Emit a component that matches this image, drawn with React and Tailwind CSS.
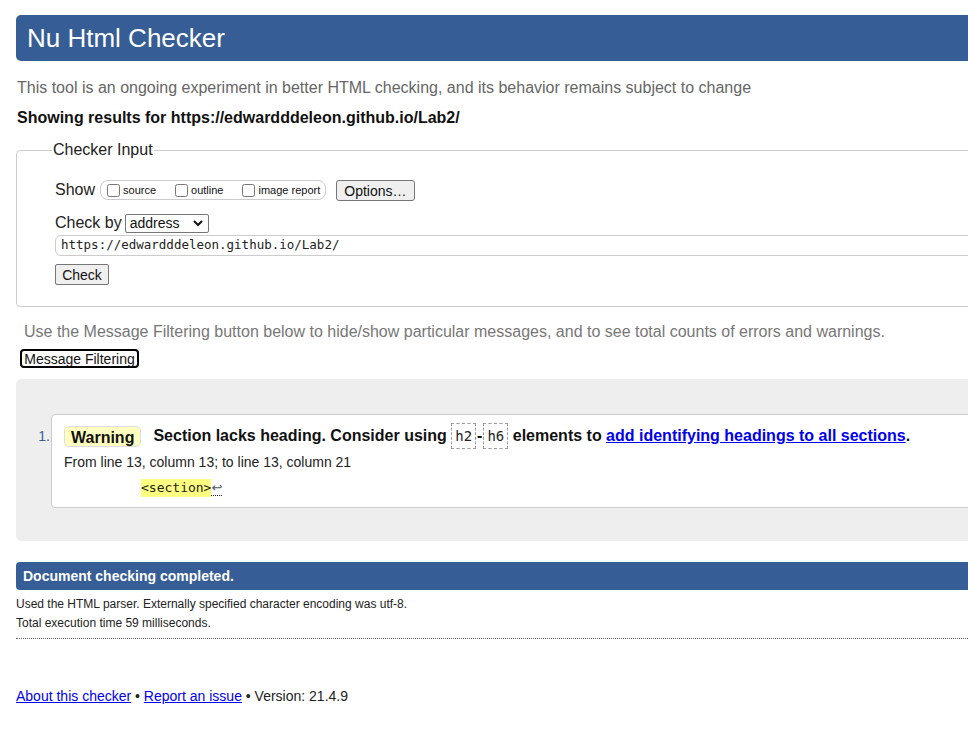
import React from 'react';

const sans = { fontFamily: '"Liberation Sans", Arial, sans-serif' };

function Checkbox({ label }) {
    return (
        <label className="inline-flex items-center gap-[3px] text-[11px] text-[#111]">
            <input type="checkbox" className="w-[13px] h-[13px] m-0" />
            {label}
        </label>
    );
}

function CodeBox({ children }) {
    return (
        <code className="inline-block border border-dashed border-[#999] px-[3px] leading-[24px] font-['DejaVu_Sans_Mono',monospace] font-normal text-[14px] text-[#222]">
            {children}
        </code>
    );
}

export default function App() {
    return (
        <div className="w-full min-h-[738px] bg-white overflow-hidden font-['Liberation_Sans',Arial,sans-serif]" style={sans}>
            <div className="w-[1120px] pl-4 pt-[15px]">
                {/* Header */}
                <h1 className="h-[46px] bg-[#365d95] rounded-[5px] text-white text-[26px] leading-[46px] pl-[11px]">
                    Nu Html Checker
                </h1>

                <p className="mt-[17px] text-[16px] leading-[20px] text-[#666] pl-px">
                    This tool is an ongoing experiment in better HTML checking, and its behavior remains subject to change
                </p>
                <p className="mt-[10px] text-[16px] leading-[20px] font-bold text-[#111] pl-px">
                    Showing results for https://edwardddeleon.github.io/Lab2/
                </p>

                {/* Checker input */}
                <fieldset className="mt-[12px] border border-[#ccc] rounded-[4px] pl-[38px] pr-4 pb-[19px] pt-[12px]">
                    <legend className="text-[16px] leading-[20px] text-[#222] -ml-[3px] px-px">Checker Input</legend>

                    <div className="flex items-center h-[22px] mt-[7px]">
                        <span className="text-[16px] text-[#222] mr-[5px]">Show</span>
                        <div className="flex items-center h-[20px] border border-[#ccc] rounded-[8px] pl-[6px] pr-[5px] gap-[19px]">
                            <Checkbox label="source" />
                            <Checkbox label="outline" />
                            <Checkbox label="image report" />
                        </div>
                        <button className="ml-[10px] h-[21px] px-[7px] bg-[#efefef] border border-[#767676] rounded-[3px] text-[14px] text-[#111]">
                            Options…
                        </button>
                    </div>

                    <div className="flex items-center mt-[12px] h-[20px]">
                        <span className="text-[16px] text-[#222] mr-[3px]">Check by</span>
                        <div className="relative w-[84px] h-[19px] border border-[#767676] rounded-[2px] flex items-center pl-[4px] text-[14px] text-[#111]">
                            address
                            <svg className="absolute right-[5px] top-[5px]" width="10" height="7" viewBox="0 0 10 7">
                                <path d="M1 1 L5 5 L9 1" fill="none" stroke="#111" strokeWidth="2" />
                            </svg>
                        </div>
                    </div>

                    <div className="mt-[2px] h-[21px] border border-[#ccc] rounded-[6px] flex items-center pl-[5px] font-['DejaVu_Sans_Mono',monospace] text-[12.5px] text-[#222]">
                        https://edwardddeleon.github.io/Lab2/
                    </div>

                    <button className="mt-[8px] h-[21px] w-[54px] bg-[#efefef] border border-[#767676] rounded-[2px] text-[14px] text-[#111]">
                        Check
                    </button>
                </fieldset>

                <p className="mt-[15px] pl-2 text-[16px] leading-[20px] text-[#777]">
                    Use the Message Filtering button below to hide/show particular messages, and to see total counts of errors and warnings.
                </p>
                <button className="block mt-[7px] ml-1 h-[19px] w-[119px] border-2 border-black rounded-[4px] text-[14px] leading-[14px] text-[#111] bg-white">
                    Message Filtering
                </button>

                {/* Results */}
                <div className="mt-[11px] bg-[#eee] rounded-[5px] pt-[35px] pb-[33px]">
                    <div className="flex">
                        <span className="w-[35px] text-right pr-[1px] pt-[12px] text-[14px] text-[#365d95]">1.</span>
                        <div className="flex-1 bg-white border border-[#ccc] rounded-[4px] pl-3 pt-[10px] pb-[10px]">
                            <div className="flex items-center h-[22px] text-[16px] font-bold text-[#111]">
                                <span className="h-[21px] leading-[21px] bg-[#ffffc0] border border-[#ddd] rounded-[5px] px-[6px] mr-3">
                                    Warning
                                </span>
                                <span className="whitespace-pre">Section lacks heading. Consider using </span>
                                <CodeBox>h2</CodeBox>
                                <span className="mx-px">-</span>
                                <CodeBox>h6</CodeBox>
                                <span className="whitespace-pre"> elements to </span>
                                <a href="#" className="text-[#0000ee] underline">add identifying headings to all sections</a>
                                <span>.</span>
                            </div>
                            <p className="mt-[6px] text-[14px] leading-[18px] text-[#222]">
                                From line 13, column 13; to line 13, column 21
                            </p>
                            <p className="mt-[8px] pl-[77px] leading-[18px] font-['DejaVu_Sans_Mono',monospace] text-[13px] text-[#222]">
                                <span className="bg-[#ffff80] inline-block h-[18px]">&lt;section&gt;</span>
                                <span className="inline-block border-b border-dotted border-[#222] text-[#555] font-['DejaVu_Sans',sans-serif] leading-[15px]">↩</span>
                            </p>
                        </div>
                    </div>
                </div>

                {/* Completion */}
                <div className="mt-[21px] h-[28px] bg-[#365d95] rounded-l-[4px] pl-[7px] flex items-center text-white font-bold text-[14px]">
                    Document checking completed.
                </div>
                <p className="mt-[5px] text-[12px] leading-[19px] text-[#222]">
                    Used the HTML parser. Externally specified character encoding was utf-8.
                </p>
                <p className="text-[12px] leading-[19px] text-[#222]">
                    Total execution time 59 milliseconds.
                </p>
                <div className="mt-[5px] border-b border-dotted border-[#666]" />

                <p className="mt-[48px] text-[14px] leading-[18px] text-[#222]">
                    <a href="#" className="text-[#0000ee] underline">About this checker</a>
                    {' • '}
                    <a href="#" className="text-[#0000ee] underline">Report an issue</a>
                    {' • Version: 21.4.9'}
                </p>
            </div>
        </div>
    );
}
